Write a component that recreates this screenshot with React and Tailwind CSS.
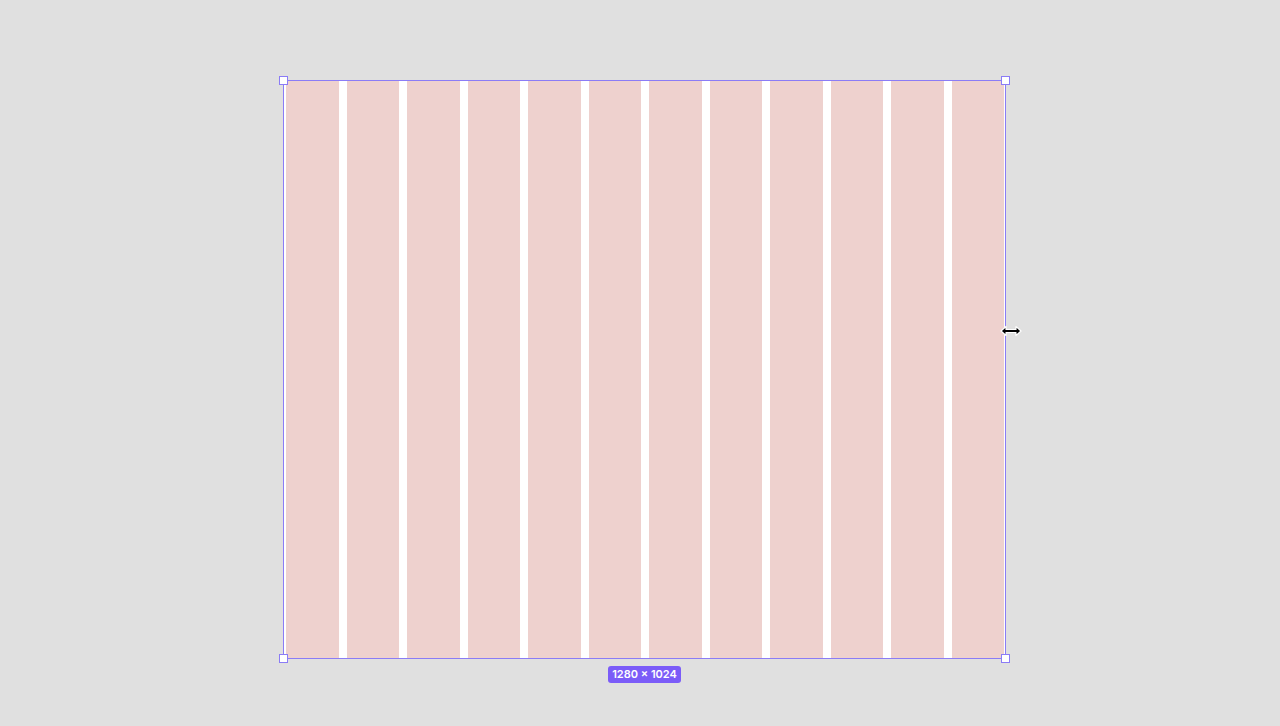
import React from 'react';

const columns = Array.from({ length: 12 }, (_, i) => i);

const Handle = ({ className }) => (
  <div className={`absolute w-[9px] h-[9px] bg-white border-[1.5px] border-[#8b7cf6] ${className}`} />
);

const ResizeCursor = () => (
  <svg width="22" height="12" viewBox="0 0 22 12" className="absolute left-[1000px] top-[325px]">
    <path d="M1 6 L6 1.5 L6 4.5 L16 4.5 L16 1.5 L21 6 L16 10.5 L16 7.5 L6 7.5 L6 10.5 Z" fill="#000" stroke="#fff" strokeWidth="1.2" strokeLinejoin="round" />
  </svg>
);

export default function App() {
  return (
    <div className="relative w-[1280px] h-[726px] bg-[#e0e0e0] overflow-hidden font-['Inter','Liberation_Sans',sans-serif]">
      <div className="pt-[80px] pl-[283px] flex flex-col items-center w-[723px] box-content">
        <div className="relative w-[723px] h-[579px] bg-white border-[1.5px] border-[#8b7cf6]">
          <div className="flex h-full gap-[8px] pl-[2px] pr-[1px]">
            {columns.map((c) => (
              <div key={c} className="flex-1 h-full bg-[#eed1ce]" />
            ))}
          </div>
          <Handle className="-left-[5px] -top-[5px]" />
          <Handle className="-right-[5px] -top-[5px]" />
          <Handle className="-left-[5px] -bottom-[5px]" />
          <Handle className="-right-[5px] -bottom-[5px]" />
        </div>
        <div className="mt-[7px] h-[17px] px-[4px] rounded-[3px] bg-[#7b5cf8] text-white text-[11px] font-semibold leading-[17px] flex items-center">
          1280 × 1024
        </div>
      </div>
      <ResizeCursor />
    </div>
  );
}
